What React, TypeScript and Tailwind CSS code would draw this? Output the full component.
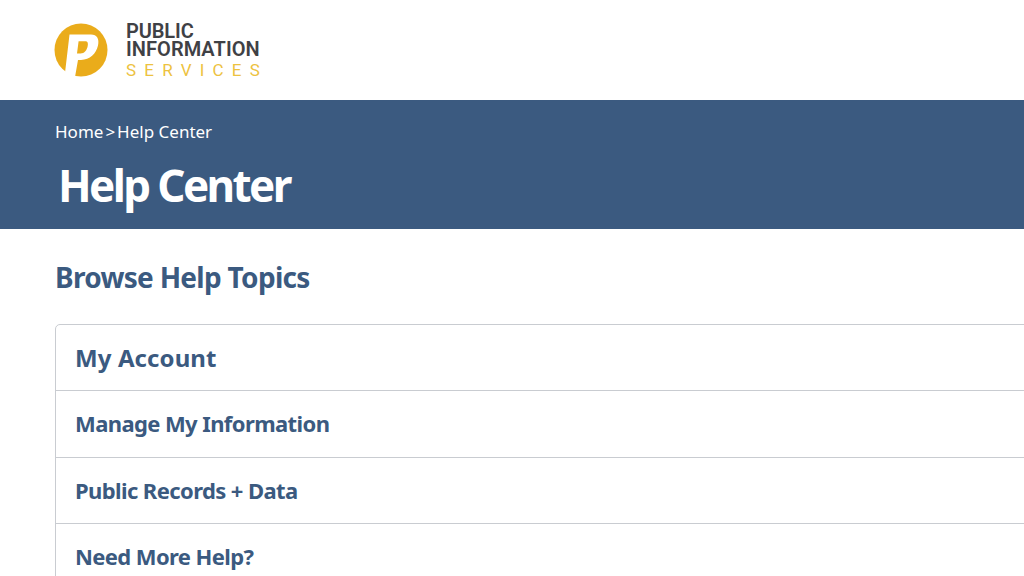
import React from "react";

const topics = [
  { title: "Manage My Information" },
  { title: "Public Records + Data" },
  { title: "Need More Help?" },
];

function LogoMark() {
  return (
    <svg width="54" height="56" viewBox="0 0 54 56" className="shrink-0">
      <circle cx="27" cy="28" r="26.5" fill="#eaac1b" />
      <path
        fillRule="evenodd"
        fill="#ffffff"
        d="M15.5 12.5 L37 12.5 C43 12.5 45.5 17 44 23.5 C42 32 36 37.5 27 38 L24 38 L21 55 L10.5 55 Z M24.6 19.2 L32 19.2 C33.8 19.2 34.2 21.5 33.7 24 C33 28 30.5 31.5 26.5 31.5 L23 31.5 Z"
      />
    </svg>
  );
}

export default function App() {
  return (
    <div className="h-[576px] w-[1024px] overflow-hidden bg-white font-['Noto_Sans',sans-serif]">
      <header className="flex h-[100px] items-center gap-[18px] pl-[54px] pb-[1px]">
        <LogoMark />
        <div className="flex flex-col pt-[2px] font-['Roboto',sans-serif]">
          <span className="text-[20px] leading-[18px] font-semibold tracking-[-0.1px] text-[#3f4145]">PUBLIC</span>
          <span className="text-[20px] leading-[18px] font-semibold tracking-[0.05px] text-[#3f4145]">INFORMATION</span>
          <span className="mt-[3px] text-[17px] leading-[18px] tracking-[8.2px] text-[#edc23f]">SERVICES</span>
        </div>
      </header>

      <section className="h-[129px] bg-[#3b5a80] pl-[55px] text-white">
        <div className="flex pt-[21px] text-[17px] leading-[22px]">
          <span>Home</span>
          <span className="mx-[2px]">&gt;</span>
          <span>Help Center</span>
        </div>
        <h1 className="mt-[12px] pl-[3px] font-['Noto_Sans',sans-serif] text-[44px] leading-[60px] font-bold tracking-[-2.6px]">
          Help Center
        </h1>
      </section>

      <main className="pl-[55px]">
        <h2 className="pt-[28px] text-[28px] leading-[40px] font-bold tracking-[-0.7px] text-[#3b5a80]">
          Browse Help Topics
        </h2>
        <div className="mt-[27px] w-[1100px] rounded-[5px] border border-[#c9ccd1]">
          <div className="flex h-[65px] items-center pl-[19px] text-[24px] font-bold tracking-[0.1px] text-[#3b5a80]">
            My Account
          </div>
          {topics.map((topic) => (
            <div
              key={topic.title}
              className="flex h-[66.5px] items-center border-t border-[#c9ccd1] pl-[19px] text-[22px] font-bold tracking-[-0.6px] text-[#3b5a80]"
            >
              {topic.title}
            </div>
          ))}
        </div>
      </main>
    </div>
  );
}
